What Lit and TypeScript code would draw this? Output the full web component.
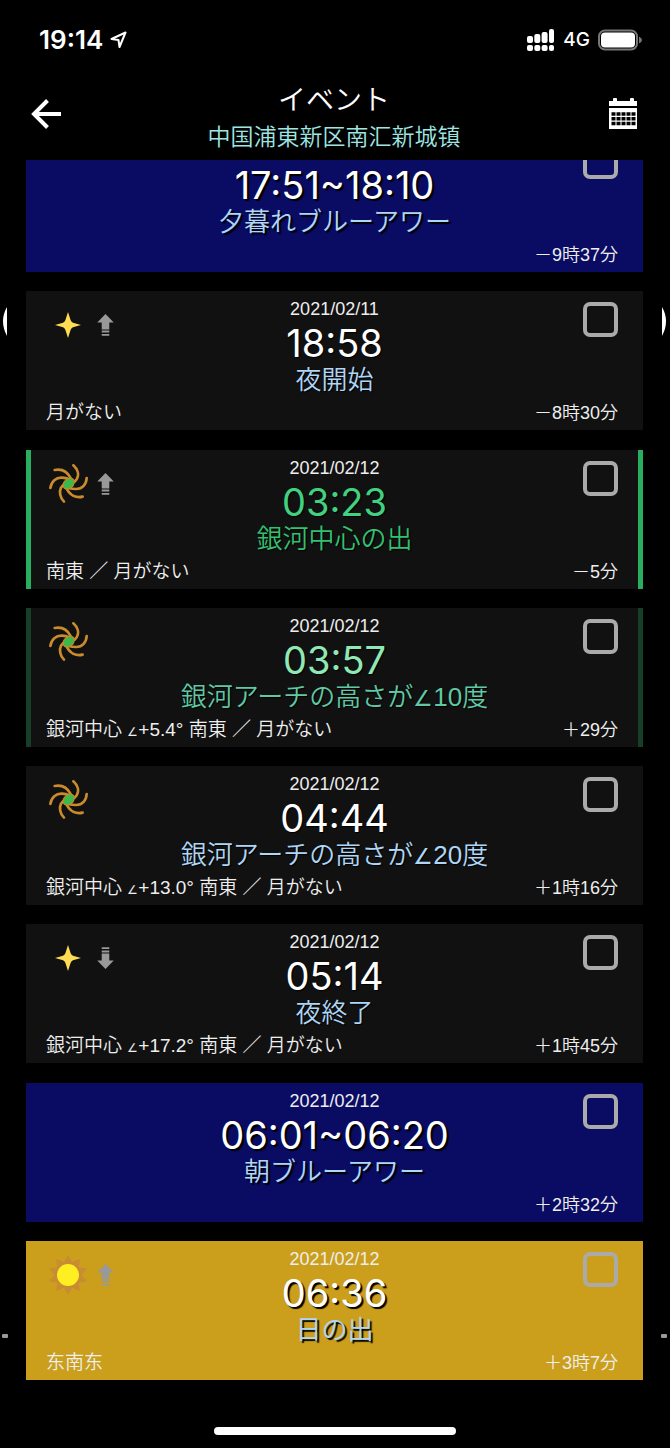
import { LitElement, html, svg, css, nothing } from "lit";
import { customElement, property } from "lit/decorators.js";
import { classMap } from "lit/directives/class-map.js";

type IconName = "star" | "galaxy" | "sun";

interface SkyEvent {
  icon?: IconName;
  trend?: "up" | "down";
  date?: string;
  time: string;
  name: string;
  note?: string;
  offset: string;
  tone?: "now" | "soon" | "blue" | "gold";
}

const EVENTS: SkyEvent[] = [
  { time: "17:51~18:10", name: "夕暮れブルーアワー", offset: "－9時37分", tone: "blue" },
  { icon: "star", trend: "up", date: "2021/02/11", time: "18:58", name: "夜開始", note: "月がない", offset: "－8時30分" },
  { icon: "galaxy", trend: "up", date: "2021/02/12", time: "03:23", name: "銀河中心の出", note: "南東 ／ 月がない", offset: "－5分", tone: "now" },
  { icon: "galaxy", date: "2021/02/12", time: "03:57", name: "銀河アーチの高さが∠10度", note: "銀河中心 ∠+5.4° 南東 ／ 月がない", offset: "＋29分", tone: "soon" },
  { icon: "galaxy", date: "2021/02/12", time: "04:44", name: "銀河アーチの高さが∠20度", note: "銀河中心 ∠+13.0° 南東 ／ 月がない", offset: "＋1時16分" },
  { icon: "star", trend: "down", date: "2021/02/12", time: "05:14", name: "夜終了", note: "銀河中心 ∠+17.2° 南東 ／ 月がない", offset: "＋1時45分" },
  { date: "2021/02/12", time: "06:01~06:20", name: "朝ブルーアワー", offset: "＋2時32分", tone: "blue" },
  { icon: "sun", trend: "up", date: "2021/02/12", time: "06:36", name: "日の出", note: "东南东", offset: "＋3時7分", tone: "gold" },
];

const rays = Array.from({ length: 20 }, (_, i) => {
  const r = i % 2 ? 40 : 60;
  const a = (i * Math.PI) / 10;
  return `${(60 + r * Math.sin(a)).toFixed(1)},${(60 - r * Math.cos(a)).toFixed(1)}`;
}).join(" ");

const ICONS = {
  star: svg`<svg class="icon" viewBox="0 0 120 120" aria-hidden="true">
    <path fill="#ffdc52" d="M60 21L68 46Q70 51 75 53L99 60L75 67Q70 69 68 74L60 99L52 74Q50 69 45 67L21 60L45 53Q50 51 52 46z"/></svg>`,
  galaxy: svg`<svg class="icon" viewBox="24 27 120 120" aria-hidden="true">
    <g fill="none" stroke="#c98b2c" stroke-width="8" stroke-linecap="round">
      <path d="M100 31C112 42 119 58 110 73L104 80"/>
      <path d="M44 45C64 41 82 50 92 69"/>
      <path d="M31 99C34 80 48 67 66 68C74 69 80 70 86 72"/>
      <path d="M72 140C60 128 57 110 63 98L70 90"/>
      <path d="M128 125C108 130 90 121 80 101"/>
      <path d="M140 69C139 88 127 102 109 102C99 102 92 101 86 99"/>
    </g>
    <ellipse cx="86" cy="86" rx="19" ry="14" transform="rotate(-42 86 86)" fill="#3cb94a" stroke="#c98b2c" stroke-width="3"/></svg>`,
  sun: svg`<svg class="icon" viewBox="0 0 120 120" aria-hidden="true">
    <polygon points=${rays} fill="#c88c32"/><circle cx="60" cy="60" r="33" fill="#ffef22"/></svg>`,
};

const TREND = svg`<path fill="#999" d="M24 0L48 25H35V45H13V25H0zM13 48h22v6H13zM13 58h22v5H13z"/>`;

@customElement("event-card")
class EventCard extends LitElement {
  @property({ attribute: false }) event!: SkyEvent;

  static styles = css`
    :host { display: block; }
    .card {
      background: #111;
      color: #fff;
      padding: 8px 0 5px;
      text-shadow: 1px 1px 1px #000;
    }
    .blue { background: #0a0b63; }
    .gold { background: #cb9f1b; }
    .now { box-shadow: inset 5px 0 #27ae5f, inset -5px 0 #27ae5f; }
    .soon { box-shadow: inset 5px 0 #173f27, inset -5px 0 #173f27; }
    .head {
      display: grid;
      grid-template-columns: 1fr auto 1fr;
      padding: 0 23px;
    }
    .icons {
      display: flex;
      gap: 9px;
      align-items: center;
      align-self: start;
      margin-top: 6px;
    }
    .icon { width: 40px; height: 40px; margin-left: -1px; }
    .trend { width: 17px; height: 22px; }
    .down { transform: rotate(180deg); }
    .main { text-align: center; }
    .date { min-height: 20px; font-size: 18px; line-height: 20px; color: #eee; text-shadow: none; }
    .time { font: 400 38px/48px Inter, sans-serif; }
    .name {
      font-size: 26px;
      line-height: 26px;
      color: #afd6f5;
    }
    .now .time { color: #41d180; }
    .now .name { color: #34c070; }
    .soon .time { color: #90e8b4; }
    .soon .name { color: #60c8a4; }
    .gold .time, .gold .name, .blue .time, .blue .name { text-shadow: 2px 2px 1px #000; }
    .pick {
      appearance: none;
      box-sizing: border-box;
      justify-self: end;
      width: 35px;
      height: 35px;
      margin: 3px 2px 0 0;
      border: 4px solid #aaa;
      border-radius: 7px;
    }
    .pick:checked { background: #aaa; }
    .foot {
      display: flex;
      justify-content: space-between;
      margin-top: 8px;
      padding: 0 25px 0 20px;
      font-size: 19px;
      line-height: 24px;
      color: #eee;
      text-shadow: none;
    }
    .angle { font-family: "DejaVu Sans", sans-serif; font-size: 22px; line-height: 1px; }
    .foot .angle { font-size: 12px; }
    .offset { font-size: 18px; margin-left: auto; }
  `;

  private withAngle(text: string) {
    const [before, after] = text.split("∠");
    return after === undefined ? before : html`${before}<span class="angle">∠</span>${after}`;
  }

  render() {
    const e = this.event;
    return html`<article class=${classMap({ card: true, [e.tone ?? "plain"]: true })}>
      <div class="head">
        <div class="icons">
          ${e.icon ? ICONS[e.icon] : nothing}
          ${e.trend
            ? html`<svg class="trend ${e.trend}" viewBox="0 0 48 64" aria-hidden="true">${TREND}</svg>`
            : nothing}
        </div>
        <div class="main">
          <div class="date">${e.date ?? nothing}</div>
          <div class="time">${e.time}</div>
          <div class="name">${this.withAngle(e.name)}</div>
        </div>
        <input class="pick" type="checkbox" aria-label=${e.name} />
      </div>
      <div class="foot">
        <span>${e.note ? this.withAngle(e.note) : nothing}</span>
        <span class="offset">${e.offset}</span>
      </div>
    </article>`;
  }
}

@customElement("app-root")
class AppRoot extends LitElement {
  static styles = css`
    :host {
      display: flex;
      flex-direction: column;
      position: relative;
      height: 100vh;
      overflow: hidden;
      background: #000;
      color: #fff;
      font-family: "Liberation Sans", "Noto Sans CJK JP", sans-serif;
      font-weight: 350;
    }
    .status {
      display: flex;
      align-items: center;
      padding: 24px 28px 0 39px;
      font: 600 26px/32px Inter, sans-serif;
    }
    .locate { width: 17px; height: 18px; margin-left: 7px; }
    .signal { width: 28px; height: 22px; margin-left: auto; }
    .network { font-size: 19px; font-weight: 500; margin: 0 8px; }
    .battery { width: 44px; height: 22px; }
    .bar {
      display: grid;
      grid-template-columns: 1fr auto 1fr;
      align-items: start;
      padding: 28px 33px 4px 31px;
    }
    .action {
      display: flex;
      align-items: center;
      justify-self: start;
      margin: 14px 0 0;
      padding: 0;
      border: 0;
      background: none;
      height: 32px;
    }
    .action:last-child { justify-self: end; }
    .back { width: 31px; height: 30px; }
    .calendar { width: 28px; height: 32px; }
    .titles { text-align: center; }
    .title { margin: 0; font-size: 28px; font-weight: 350; line-height: 34px; }
    .place { margin: 0; font-size: 23px; line-height: 38px; color: #9fe6e2; }
    .viewport { flex: 1; min-height: 0; overflow: hidden; }
    .events {
      display: flex;
      flex-direction: column;
      justify-content: space-between;
      height: calc(100% + 27px);
      margin: -27px 27px 0 26px;
    }
    .home { display: flex; justify-content: center; padding: 47px 0 13px; }
    .grip { width: 36%; height: 8px; border-radius: 4px; background: #fff; }
    .peek { position: absolute; top: 307px; width: 5px; height: 29px; }
    .tick { position: absolute; top: 1334px; width: 6px; height: 4px; border-radius: 1px; background: #999; }
    .left { left: 2px; }
    .right { right: 3px; }
  `;

  render() {
    return html`
      <div class="status">
        <span>19:14</span>
        <svg class="locate" viewBox="0 0 17 18" aria-hidden="true">
          <path d="M1.5 8L15.5 1.5L9.5 16L8.5 9z" fill="none" stroke="#fff" stroke-width="2" stroke-linejoin="round"/>
        </svg>
        <svg class="signal" viewBox="0 0 28 22" aria-hidden="true" fill="#fff">
          <rect x="0" y="7" width="6" height="7" rx="2"/><rect x="7.300" y="5" width="6" height="9" rx="2"/>
          <rect x="14.600" y="3" width="6" height="11" rx="2"/><rect x="22" y="0" width="5" height="14" rx="2"/>
          <rect x="0" y="16" width="6" height="6" rx="2"/><rect x="7.300" y="16" width="6" height="6" rx="2"/>
          <rect x="14.600" y="16" width="6" height="6" rx="2"/><rect x="22" y="16" width="5" height="6" rx="2"/>
        </svg>
        <span class="network">4G</span>
        <svg class="battery" viewBox="0 0 44 22" aria-hidden="true">
          <rect x="1" y="1.500" width="38" height="19" rx="6" fill="none" stroke="#777" stroke-width="2"/>
          <rect x="3" y="3.500" width="34" height="15" rx="4" fill="#fff"/>
          <path d="M41 7.500Q44 9 44 11Q44 13 41 14.500z" fill="#777"/>
        </svg>
      </div>
      <header class="bar">
        <button class="action" aria-label="戻る">
          <svg class="back" viewBox="0 0 31 30" fill="none" stroke="#fff" stroke-width="4">
            <path d="M16.500 1.500L3 15L16.500 28.500M3 15H30"/>
          </svg>
        </button>
        <div class="titles">
          <h1 class="title">イベント</h1>
          <p class="place">中国浦東新区南汇新城镇</p>
        </div>
        <button class="action" aria-label="カレンダー">
          <svg class="calendar" viewBox="0 0 28 32">
            <path fill="#fff" d="M0 3h4V1q0-1 1-1h2q1 0 1 1v2h13V1q0-1 1-1h2q1 0 1 1v2h3v5H0zM0 10h28v21H0z"/>
            <path stroke="#000" stroke-width="3.500" stroke-dasharray="4 1" d="M2.500 16h24M2.500 20.700h24M2.500 25.500h24"/>
          </svg>
        </button>
      </header>
      <main class="viewport">
        <div class="events">${EVENTS.map((e) => html`<event-card .event=${e}></event-card>`)}</div>
      </main>
      <div class="home"><div class="grip"></div></div>
      <svg class="peek left" viewBox="0 0 5 29" aria-hidden="true"><path d="M5 0Q-3 14 5 29z" fill="#fff"/></svg>
      <svg class="peek right" viewBox="0 0 5 29" aria-hidden="true"><path d="M0 0Q8 14 0 29z" fill="#fff"/></svg>
      <span class="tick left"></span><span class="tick right"></span>
    `;
  }
}
